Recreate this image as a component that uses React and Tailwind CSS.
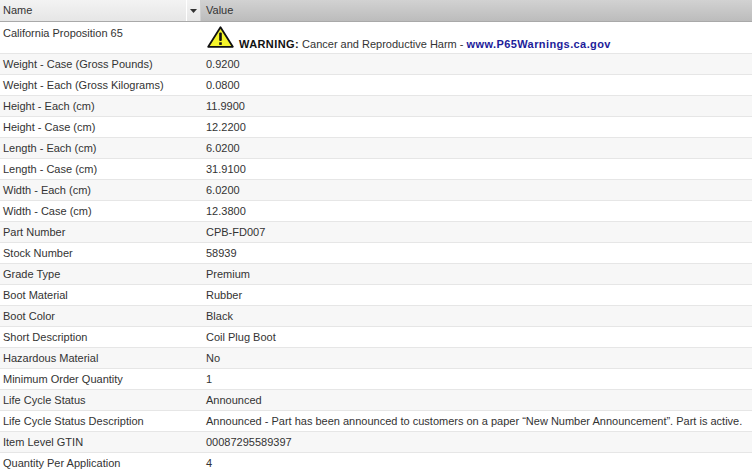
import React from "react";

const rows = [
  ["Weight - Case (Gross Pounds)", "0.9200"],
  ["Weight - Each (Gross Kilograms)", "0.0800"],
  ["Height - Each (cm)", "11.9900"],
  ["Height - Case (cm)", "12.2200"],
  ["Length - Each (cm)", "6.0200"],
  ["Length - Case (cm)", "31.9100"],
  ["Width - Each (cm)", "6.0200"],
  ["Width - Case (cm)", "12.3800"],
  ["Part Number", "CPB-FD007"],
  ["Stock Number", "58939"],
  ["Grade Type", "Premium"],
  ["Boot Material", "Rubber"],
  ["Boot Color", "Black"],
  ["Short Description", "Coil Plug Boot"],
  ["Hazardous Material", "No"],
  ["Minimum Order Quantity", "1"],
  ["Life Cycle Status", "Announced"],
  ["Life Cycle Status Description", "Announced - Part has been announced to customers on a paper \u201cNew Number Announcement\u201d. Part is active."],
  ["Item Level GTIN", "00087295589397"],
  ["Quantity Per Application", "4"],
];

function Warn() {
  return (
    <svg width="27" height="22" viewBox="0 0 27 22" className="shrink-0">
      <polygon points="13.5,1.2 25.8,20.8 1.2,20.8" fill="#f5f52a" stroke="#111" strokeWidth="1.8" strokeLinejoin="round" />
      <rect x="12.2" y="6.5" width="2.6" height="8.5" rx="1" fill="#111" />
      <rect x="12.2" y="16.3" width="2.6" height="2.6" fill="#111" />
    </svg>
  );
}

export default function App() {
  return (
    <div className="w-[752px] h-[470px] overflow-hidden bg-white text-[#333] text-[11px] leading-[13px]" style={{ fontFamily: '"Liberation Sans", Arial, sans-serif' }}>
      <div className="flex h-[22px] border-b border-[#a9a9a9]">
        <div className="flex w-[201px] shrink-0 bg-gradient-to-b from-[#f3f3f3] to-[#e6e6e6]">
          <div className="flex-1 flex items-center pl-[3px] border-r border-white">Name</div>
          <div className="w-[14px] flex items-center justify-center border-r border-[#d0d0d0]">
            <svg width="7" height="4" viewBox="0 0 7 4"><polygon points="0,0 7,0 3.5,4" fill="#333" /></svg>
          </div>
        </div>
        <div className="flex-1 flex items-center pl-[5px] bg-gradient-to-b from-[#d2d2d2] to-[#bcbcbc]">Value</div>
      </div>
      <div className="flex h-[32px] border-b border-[#e6e6e6] bg-white">
        <div className="w-[201px] shrink-0 pl-[3px] pt-[5px]">California Proposition 65</div>
        <div className="flex-1 flex items-end pl-[6px] pb-[5px]">
          <Warn />
          <span className="ml-[5px] leading-[11px] mb-[-2px]">
            <b className="text-[#111] tracking-[0.4px]">WARNING:</b> Cancer and Reproductive Harm - <b className="text-[#1c1c9a] tracking-[0.4px]">www.P65Warnings.ca.gov</b>
          </span>
        </div>
      </div>
      {rows.map(([n, v], i) => (
        <div key={n} className={"flex h-[21px] border-b border-[#e6e6e6] " + (i % 2 === 0 ? "bg-[#f7f7f7]" : "bg-white")}>
          <div className="w-[201px] shrink-0 pl-[3px] pt-[1px] flex items-center">{n}</div>
          <div className="flex-1 pl-[5px] pt-[1px] flex items-center whitespace-nowrap">{v}</div>
        </div>
      ))}
    </div>
  );
}
